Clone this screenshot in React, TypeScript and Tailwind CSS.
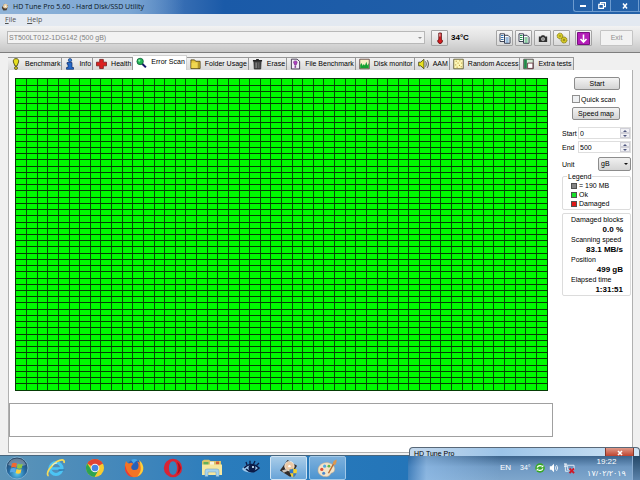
import { useState } from 'react';
import type { ReactNode } from 'react';

const COLUMNS = 50;
const ROWS = 50;

const BenchmarkIcon = () => (
    <svg viewBox="0 0 10 12" className="w-[10px] h-3 shrink-0">
        <path d="M5 .6C2.6.6 2 2.4 2.4 4L4 8h2l1.6-4C8 2.4 7.400.6 5 .6Z" fill="#e8e020" stroke="#3a3a10" strokeWidth=".8" />
        <circle cx="5" cy="10" r="1.500" fill="#d8cc20" stroke="#3a3a10" strokeWidth=".7" />
    </svg>
);

const InfoIcon = () => (
    <svg viewBox="0 0 10 12" className="w-[10px] h-3 shrink-0">
        <circle cx="5" cy="2.200" r="1.700" fill="#3b82d8" stroke="#0b2c6a" strokeWidth=".6" />
        <path d="M2 4.500h5v5h1.500v1.800h-7V9.500H3V6.200H2Z" fill="#2468c8" stroke="#0b2c6a" strokeWidth=".7" />
    </svg>
);

const HealthIcon = () => (
    <svg viewBox="0 0 12 12" className="w-[11px] h-3 shrink-0">
        <path d="M4 1h4v3h3.500v4H8v3H4V8H.5V4H4Z" fill="#dc2020" stroke="#701010" strokeWidth=".8" />
    </svg>
);

const ScanIcon = () => (
    <svg viewBox="0 0 12 12" className="w-[11px] h-3 shrink-0">
        <path d="m6.500 6.500 4.300 4.300" stroke="#16166a" strokeWidth="2.200" />
        <circle cx="4.500" cy="4.300" r="3.500" fill="#22b455" stroke="#11603a" strokeWidth=".9" />
        <circle cx="3.600" cy="3.300" r="1.200" fill="#8ff0a8" />
    </svg>
);

const FolderIcon = () => (
    <svg viewBox="0 0 12 12" className="w-[11px] h-3 shrink-0">
        <path d="M1 3V1.500h4L6.200 3H11v8H1Z" fill="#e4c43c" stroke="#4a3a08" strokeWidth=".9" />
        <path d="M1.600 4.500h7.400v6H1.600Z" fill="#f0d850" />
        <path d="M9 4v6.500" stroke="#8a701c" strokeWidth=".8" />
    </svg>
);

const EraseIcon = () => (
    <svg viewBox="0 0 12 12" className="w-[11px] h-3 shrink-0">
        <path d="M2 3h8l-.5 8.500h-7Z" fill="#4a4a4a" stroke="#1d1d1d" strokeWidth=".7" />
        <path d="M1 1.500h10v1.700H1ZM4.500.5h3v1h-3Z" fill="#222" />
        <path d="M4.500 4.500v6" stroke="#a0a0a0" />
        <path d="M7.300 4.500v6" stroke="#777" strokeWidth=".7" />
    </svg>
);

const FileIcon = () => (
    <svg viewBox="0 0 12 12" className="w-[11px] h-3 shrink-0">
        <path d="M1.500.7h6.200l2.800 2.500v8.200h-9Z" fill="#f4eef8" stroke="#2a2038" strokeWidth=".9" />
        <path d="M5.800 2.600c-1.800 0-2.200 1-1.800 2l1.200 2.800h1.400l1.200-2.800c.4-1-.2-2-2-2Z" fill="#b040c0" stroke="#4a1858" strokeWidth=".5" />
        <circle cx="5.800" cy="9.200" r="1" fill="#803090" />
    </svg>
);

const MonitorIcon = () => (
    <svg viewBox="0 0 12 12" className="w-[11px] h-3 shrink-0">
        <path d="M.8.8h10.400v10.400H.8Z" fill="#f6f0c4" stroke="#5a3a3a" strokeWidth=".9" />
        <path d="M1.300 10.700V7l1.500-2 1.200 3 1.200-2 1.300 1.500 1.500-4 1.200 4L10.700 5v5.700Z" fill="#14a030" />
    </svg>
);

const SpeakerIcon = () => (
    <svg viewBox="0 0 12 12" className="w-[11px] h-3 shrink-0">
        <path d="M.7 4h2.200L6.500.9v10.200L2.900 8H.7Z" fill="#e8e020" stroke="#2c2c08" strokeWidth=".8" />
        <path d="M8.200 3.200c1 1.500 1 4 0 5.600M10 1.800c1.800 2.400 1.800 6 0 8.400" fill="none" stroke="#333" strokeWidth=".9" />
    </svg>
);

const RandomIcon = () => (
    <svg viewBox="0 0 12 12" className="w-[11px] h-3 shrink-0">
        <path d="M.8.8h10.400v10.400H.8Z" fill="#fdf6b4" stroke="#55502c" strokeWidth=".9" />
        <path d="M3 3h1M7 2.500h1M5 5h1M9 5h1M2.500 7h1M6.500 7.500h1M4 9.500h1M8.500 9h1" stroke="#a07818" />
    </svg>
);

const ExtraIcon = () => (
    <svg viewBox="0 0 12 12" className="w-[11px] h-3 shrink-0">
        <path d="M.8.8h10.400v10.400H.8Z" fill="#d8ecd8" stroke="#403838" strokeWidth=".9" />
        <path d="M1.200 1.200h3v9.600h-3Z" fill="#208848" />
        <path d="M5 5h5.800v5.800H5Z" fill="#fff" stroke="#602838" strokeWidth=".9" />
    </svg>
);

const tabs: { name: string; icon: ReactNode }[] = [
    { name: 'Benchmark', icon: <BenchmarkIcon /> },
    { name: 'Info', icon: <InfoIcon /> },
    { name: 'Health', icon: <HealthIcon /> },
    { name: 'Error Scan', icon: <ScanIcon /> },
    { name: 'Folder Usage', icon: <FolderIcon /> },
    { name: 'Erase', icon: <EraseIcon /> },
    { name: 'File Benchmark', icon: <FileIcon /> },
    { name: 'Disk monitor', icon: <MonitorIcon /> },
    { name: 'AAM', icon: <SpeakerIcon /> },
    { name: 'Random Access', icon: <RandomIcon /> },
    { name: 'Extra tests', icon: <ExtraIcon /> },
];

const stats = [
    { label: 'Damaged blocks', value: '0.0 %' },
    { label: 'Scanning speed', value: '83.1 MB/s' },
    { label: 'Position', value: '499 gB' },
    { label: 'Elapsed time', value: '1:31:51' },
];

const legend = [
    { color: 'bg-[#848484]', text: '= 190 MB' },
    { color: 'bg-[#18e028]', text: 'Ok' },
    { color: 'bg-[#e01818]', text: 'Damaged' },
];

function TitleBar() {
    return (
        <header className="h-[14px] flex items-center bg-linear-to-r from-[#9fbfe0] via-[#1a5aa8] via-35% to-[#2461a8] overflow-hidden">
            <div className="h-full flex items-center gap-1 pl-px pr-10 bg-linear-to-r from-[#8fb3d8] via-[#7ba6d4] via-70% to-transparent">
                <svg viewBox="0 0 10 10" className="w-2 h-2">
                    <path d="m1 6 3-5 5 2-2 6-4 .5Z" fill="#4c3c2c" />
                    <circle cx="5.500" cy="4" r="3" fill="#e8d0a8" />
                    <circle cx="5.500" cy="4" r="1" fill="#fff" />
                </svg>
                <h1 className="font-['Open_Sans','Liberation_Sans',sans-serif] text-[7px] leading-3 text-[#0a1420]">HD Tune Pro 5.60 - Hard Disk/SSD Utility</h1>
            </div>
            <div className="ml-auto flex h-3 self-start border-l border-b border-[#6d9bcf] rounded-bl-[3px] text-white">
                <button aria-label="Minimize" className="w-[18px] flex items-center justify-center">
                    <span className="w-[6px] h-[2px] bg-white" />
                </button>
                <button aria-label="Restore" className="w-[18px] border-l border-[#6d9bcf] flex items-center justify-center">
                    <svg viewBox="0 0 8 7" className="w-2 h-[7px]">
                        <path d="M2.500 2V.6h5v4H6M.8 2.300h4.600v4H.8Z" fill="none" stroke="#fff" strokeWidth="1.200" />
                    </svg>
                </button>
                <button aria-label="Close" className="w-[29px] border-x border-[#6d9bcf] mr-px flex items-center justify-center">
                    <svg viewBox="0 0 6 6" className="w-[6px] h-[6px]">
                        <path d="m1 .5 4 5m0-5-4 5" stroke="#fff" strokeWidth="1.500" />
                    </svg>
                </button>
            </div>
        </header>
    );
}

function ToolButton({ label, children }: { label: string; children: ReactNode }) {
    return (
        <button aria-label={label} className="w-[17px] h-4 border border-[#a4a4a4] rounded-[1px] bg-linear-to-b from-[#f6f6f6] to-[#d8d8d8] flex items-center justify-center">
            {children}
        </button>
    );
}

function CopyIcon({ fill }: { fill: string }) {
    return (
        <svg viewBox="0 0 12 11" className="w-3 h-[11px]">
            <path d="M1 .8h4.500v7.700H1Z" fill="#fff" stroke="#2c3448" strokeWidth=".9" />
            <path d="M2 2.500h2.500M2 4.500h2.500M2 6.500h2.500" stroke={fill} />
            <path d="M5.500 2.300H9l2 2v6H5.500Z" fill="#fff" stroke="#2c3448" strokeWidth=".9" />
            <path d="M6.500 5h3.200M6.500 7h3.200M6.500 9h3.200" stroke={fill} />
        </svg>
    );
}

function ToolBar() {
    return (
        <div className="h-[27px] flex items-start pt-1 px-[7px] bg-linear-to-b from-[#f2f2f2] via-[#e0e0e0] to-[#c6c6c6] border-b border-[#7e7e7e]">
            <div className="relative flex-1 mt-px">
                <select aria-label="Drive" disabled className="block w-full h-[13px] appearance-none border border-[#b8b8b8] bg-[#f2f2f2] text-[#808080] text-[7px] leading-[11px] pl-px">
                    <option>ST500LT012-1DG142 (500 gB)</option>
                </select>
                <svg viewBox="0 0 4 2" className="absolute right-[3px] top-[6px] w-1 h-[2px]"><path d="M0 0h4L2 2Z" fill="#909090" /></svg>
            </div>
            <div className="flex items-center gap-[3px] ml-[6px]">
                <ToolButton label="Temperature">
                    <svg viewBox="0 0 8 12" className="w-2 h-3">
                        <path d="M2.800 1h2.600v6.300a2.300 2.300 0 1 1-2.600 0Z" fill="#d81c20" stroke="#501010" strokeWidth=".8" />
                        <path d="M3.500 1.500h.8v3h-.8Z" fill="#fff" />
                    </svg>
                </ToolButton>
                <span className="w-[42px] text-[8px] leading-4 font-bold">34°C</span>
            </div>
            <div className="flex items-center gap-[2px] ml-[3px]">
                <ToolButton label="Copy information"><CopyIcon fill="#3474b8" /></ToolButton>
                <ToolButton label="Copy screenshot"><CopyIcon fill="#20984c" /></ToolButton>
                <ToolButton label="Save screenshot">
                    <svg viewBox="0 0 12 10" className="w-[10px] h-[9px]">
                        <path d="M1 2.500h2.500L4.500 1h3l1 1.500H11v6.700H1Z" fill="#303030" />
                        <circle cx="6" cy="5.700" r="2" fill="#909090" stroke="#e0e0e0" strokeWidth=".6" />
                    </svg>
                </ToolButton>
                <ToolButton label="Options">
                    <svg viewBox="0 0 12 12" className="w-3 h-3">
                        <circle cx="4" cy="4" r="2.800" fill="#d8cc28" stroke="#857c18" strokeDasharray="1.500 .5" />
                        <circle cx="8" cy="8" r="3" fill="#d0c424" stroke="#857c18" strokeDasharray="1.500 .5" />
                        <circle cx="4" cy="4" r=".8" fill="#837a18" />
                        <circle cx="8" cy="8" r=".9" fill="#837a18" />
                    </svg>
                </ToolButton>
            </div>
            <div className="flex gap-2 ml-[5px]">
                <ToolButton label="Minimize to tray">
                    <svg viewBox="0 0 13 13" className="w-[13px] h-[13px]">
                        <path d="M.5.5h12v12H.5Z" fill="#b41cb8" stroke="#781080" />
                        <path d="M6.500 2.500v7M3.500 7l3 3 3-3" fill="none" stroke="#fff" strokeWidth="1.600" />
                    </svg>
                </ToolButton>
                <button disabled className="w-[33px] h-4 border border-[#c4c4c4] rounded-[1px] bg-[#f2f2f2] text-[7px] text-[#909090]">Exit</button>
            </div>
        </div>
    );
}

function BlockMap() {
    return (
        <svg role="img" aria-label="Scanned blocks" className="block w-full h-[313px] bg-[#00fa00] border border-[#053c05]" shapeRendering="crispEdges">
            {Array.from({ length: COLUMNS - 1 }, (_, i) => (
                <line key={`c${i}`} x1={`${((i + 1) * 100) / COLUMNS}%`} x2={`${((i + 1) * 100) / COLUMNS}%`} y1="0" y2="100%" stroke="#065006" />
            ))}
            {Array.from({ length: ROWS - 1 }, (_, i) => (
                <line key={`r${i}`} x1="0" x2="100%" y1={`${((i + 1) * 100) / ROWS}%`} y2={`${((i + 1) * 100) / ROWS}%`} stroke="#053c05" />
            ))}
        </svg>
    );
}

function RangeField({ id, label, value }: { id: string; label: string; value: string }) {
    return (
        <div className="flex items-center h-3">
            <label htmlFor={id} className="w-4">{label}</label>
            <div className="flex-1 h-3 flex border border-[#dedede] bg-white">
                <input id={id} type="text" defaultValue={value} className="w-0 flex-1 h-[10px] pl-px text-[7px] outline-none" />
                <div className="w-[10px] flex flex-col">
                    <button aria-label={`Increase ${label}`} className="h-[5px] border border-[#d0d0d8] bg-[#f0f0f4] flex items-center justify-center">
                        <svg viewBox="0 0 4 2" className="w-1 h-[2px]"><path d="M0 2h4L2 0Z" fill="#505880" /></svg>
                    </button>
                    <button aria-label={`Decrease ${label}`} className="h-[5px] border border-[#d0d0d8] bg-[#f0f0f4] flex items-center justify-center">
                        <svg viewBox="0 0 4 2" className="w-1 h-[2px]"><path d="M0 0h4L2 2Z" fill="#505880" /></svg>
                    </button>
                </div>
            </div>
        </div>
    );
}

function ScanControls() {
    const button = 'block h-[13px] border border-[#8c8c8c] rounded-[2px] bg-linear-to-b from-[#f4f4f4] to-[#d4d4d4] text-[7px] leading-[11px]';

    return (
        <aside className="w-[69px] mr-px pt-[7px] shrink-0 text-[7px] leading-[9px]">
            <button className={`${button} w-[46px] ml-3`}>Start</button>
            <label className="flex items-center gap-px ml-[10px] mt-1 h-[10px]">
                <input type="checkbox" className="appearance-none w-2 h-2 border border-[#909090] bg-[#eef0f2]" />
                Quick scan
            </label>
            <button className={`${button} w-12 ml-[10px] mt-[3px]`}>Speed map</button>

            <div className="mt-[7px] flex flex-col gap-[2px]">
                <RangeField id="range-start" label="Start" value="0" />
                <RangeField id="range-end" label="End" value="500" />
            </div>

            <div className="mt-1 flex items-center justify-between">
                <label htmlFor="unit">Unit</label>
                <div className="relative">
                    <select id="unit" className="block w-[33px] h-[14px] appearance-none border border-[#8c8c8c] rounded-[2px] bg-linear-to-b from-[#f0f0f0] to-[#d4d4d4] pl-[2px] text-[7px] leading-3">
                        <option>gB</option>
                        <option>MB</option>
                    </select>
                    <svg viewBox="0 0 4 2" className="absolute right-[3px] top-[6px] w-1 h-[2px]"><path d="M0 0h4L2 2Z" fill="#111" /></svg>
                </div>
            </div>

            {/* Legend */}
            <fieldset className="mt-px border border-[#dcdcdc] rounded-[2px] pl-2 pb-px">
                <legend className="-ml-1 px-px">Legend</legend>
                {legend.map((item) => (
                    <div key={item.text} className="flex items-center gap-[2px] h-[9px]">
                        <span className={`w-[6px] h-[6px] border border-[#505050] ${item.color}`} />
                        {item.text}
                    </div>
                ))}
            </fieldset>

            {/* Results */}
            <dl className="mt-[3px] border border-[#dcdcdc] rounded-[2px] pl-2 pr-[7px] pt-px">
                {stats.map((stat) => (
                    <div key={stat.label} className="h-5">
                        <dt className="leading-[10px] whitespace-nowrap">{stat.label}</dt>
                        <dd className="leading-[10px] text-right text-[8px] font-bold">{stat.value}</dd>
                    </div>
                ))}
            </dl>
        </aside>
    );
}

const StartOrb = () => (
    <svg viewBox="0 0 24 24" className="w-6 h-6">
        <defs>
            <radialGradient id="orb" cx="50%" cy="75%" r="65%">
                <stop offset="0" stopColor="#58c8f0" />
                <stop offset=".6" stopColor="#2468a0" />
                <stop offset="1" stopColor="#294868" />
            </radialGradient>
        </defs>
        <circle cx="12" cy="12" r="11" fill="url(#orb)" stroke="#7daed0" />
        <path d="M3 9a9.500 9.500 0 0 1 18 0Q12 12 3 9Z" fill="#fff" opacity=".3" />
        <path d="M7 7.500q2.500-1.500 5 0l-1 4.200q-2.500-1.200-5 0Z" fill="#f06830" />
        <path d="M12.800 7.800q2.300 1.200 4.900.2l-1 4.200q-2.500 1-4.900-.2Z" fill="#90c840" />
        <path d="M5.800 12.600q2.500-1.200 5 0l-1 4q-2.400-1.200-5 0Z" fill="#58a8e8" />
        <path d="M11.600 13q2.400 1.200 4.900.2l-1 4q-2.500 1-4.900-.2Z" fill="#fcd040" />
    </svg>
);

const ExplorerIcon = () => (
    <svg viewBox="0 0 20 20" className="w-5 h-5">
        <circle cx="10" cy="10.500" r="6" fill="none" stroke="#4cc4f4" strokeWidth="3.200" />
        <path d="M5 10.500h11" stroke="#4cc4f4" strokeWidth="2.600" />
        <path d="m12.500 13.200 6-.8v-1.200h-6Z" fill="#3180b4" />
        <path d="M2.500 18C-1 16 5 7 11 3.500c4-2.300 8-2.500 7 1.500" fill="none" stroke="#f8dc58" strokeWidth="1.700" />
        <path d="M6 7.500q2-2.700 5-2.600" fill="none" stroke="#d0f4ff" />
    </svg>
);

const ChromeIcon = () => (
    <svg viewBox="0 0 20 20" className="w-5 h-5">
        <circle cx="10" cy="10" r="9" fill="#f8cc30" />
        <path d="M10 10 2.200 5.500A9 9 0 0 1 17.800 5.500Z" fill="#e04434" />
        <path d="M10 6h8a9 9 0 0 0-.2-.5H4Z" fill="#e04434" />
        <path d="M2.200 5.500A9 9 0 0 0 9.500 19l4-6.800L10 14l-3.500-2Z" fill="#2ca450" />
        <circle cx="10" cy="10" r="4.300" fill="#f4f4f4" />
        <circle cx="10" cy="10" r="3.300" fill="#4484e4" />
    </svg>
);

const FirefoxIcon = () => (
    <svg viewBox="0 0 20 20" className="w-5 h-5">
        <circle cx="10.500" cy="9" r="7.500" fill="#2860b8" />
        <path d="M7 2q4-2 7 .5-4 1-4 3.500" fill="#48a8e8" />
        <path d="M2 3q1 2 3 2.500 3-1.500 4 .5L7.500 8q-1 3 2 4 3 .5 4.500-1.500 1.500-4-1-7Q19 5 19.300 11A9.200 9.200 0 0 1 1 11Q.5 6 2 3Z" fill="#f47424" />
        <path d="M15 2q5 4 4.200 9.500-1 5-6 7 4-4.500 3.500-9Q16.500 5 15 2Z" fill="#fcd03c" />
        <path d="M1.500 7Q2 15 9 19 2 18 1 11Z" fill="#e83838" />
    </svg>
);

const OperaIcon = () => (
    <svg viewBox="0 0 20 20" className="w-5 h-5">
        <path fillRule="evenodd" d="M10 .8a9.200 9.200 0 1 1 0 18.400A9.200 9.200 0 1 1 10 .8Zm0 2.400C7.500 3.200 6 6 6 10s1.500 6.800 4 6.800S14 14 14 10s-1.500-6.800-4-6.800Z" fill="#d82434" />
        <path d="M14 4q3 6 0 12 3-1.500 4-6-1-4.500-4-6Z" fill="#a80c20" />
    </svg>
);

const LibraryIcon = () => (
    <svg viewBox="0 0 22 18" className="w-[22px] h-[18px]">
        <path d="M1 2 3 .8h5L9.500 2H20v13H1Z" fill="#dcc468" />
        <path d="M2.500 3h5v3h-5Z" fill="#62b058" /><path d="M9 2.700h4V6H9Z" fill="#f8f4e0" /><path d="M15 2.500h3v3h-3Z" fill="#d06038" />
        <path d="M1 5.500h20V16H1Z" fill="#f6e8a0" />
        <path d="M4 17.500V12q0-2 2-2h10q2 0 2 2v5.500h-3V13H7v4.500Z" fill="#a8d4ec" stroke="#689cc0" strokeWidth=".5" />
    </svg>
);

const EyeIcon = () => (
    <svg viewBox="0 0 20 16" className="w-5 h-4">
        <path d="M1 9Q6 1 18 8 11 15 3 11Z" fill="#9cc8ec" />
        <path d="M3 8Q10 1 18 8q-7 7-13 1" fill="none" stroke="#0c1c48" strokeWidth="1.600" />
        <path d="m6 5-1-3m4 2V.7m3.500 3.600L14 1m1.500 4.500L18 3" stroke="#0c1c48" strokeWidth="1.300" />
        <circle cx="11" cy="8" r="3.500" fill="#0c1c48" /><circle cx="12" cy="7" r="1.100" fill="#d8f0ff" />
    </svg>
);

const TuneIcon = () => (
    <svg viewBox="0 0 20 20" className="w-[19px] h-[19px]">
        <path d="m1 12 8-11 10 6-7 12Z" fill="#342c28" />
        <circle cx="11" cy="7.500" r="5" fill="#ecc8a4" stroke="#fff" strokeWidth=".7" />
        <circle cx="11" cy="7.500" r="1.300" fill="#fff" />
        <path d="m3 12 5-1.500 1 2-4 2Z" fill="#c8c0b8" />
        <path d="M11 11q3 0 4-1.200 1 1.200 4 1.200 0 6-4 8.500-4-2.500-4-8.500Z" fill="#f4d030" />
        <path d="M15 10v5h-3.500q-.5-2-.5-4 3 0 4-1ZM15 15h3.500q-1 3-3.500 4.500Z" fill="#3474c8" />
    </svg>
);

const PaintIcon = () => (
    <svg viewBox="0 0 22 20" className="w-[21px] h-[19px]">
        <path d="M1 12C1 6 7 3 12 4s8 5 6 9c-1 2-3 1-4 3s-3 3-6 2.500S1 16 1 12Z" fill="#f2e4c8" stroke="#c4a88c" strokeWidth=".6" />
        <circle cx="5" cy="11" r="1.700" fill="#e05038" /><circle cx="8" cy="7.500" r="1.600" fill="#50a8e0" />
        <circle cx="12.500" cy="7.500" r="1.500" fill="#60b850" /><circle cx="7" cy="15" r="1.600" fill="#4888d0" />
        <path d="m12 15 6-11" stroke="#b86c34" strokeWidth="1.500" />
        <path d="M16.500 5q0-3 4-4.500.5 4-2 6Z" fill="#dc9850" />
    </svg>
);

const launchers = [
    { name: 'Internet Explorer', icon: <ExplorerIcon /> },
    { name: 'Chrome', icon: <ChromeIcon /> },
    { name: 'Firefox', icon: <FirefoxIcon /> },
    { name: 'Opera', icon: <OperaIcon /> },
    { name: 'Libraries', icon: <LibraryIcon /> },
    { name: 'Viewer', icon: <EyeIcon /> },
];

function TaskBar() {
    return (
        <footer className="relative h-[25px] flex items-center border-t border-[#48667e] bg-linear-to-r from-[#5c94b8] via-[#2a7cbc] via-35% to-[#1c6cb4] text-white">
            <button aria-label="Start" className="w-9 h-6 pl-[5px]"><StartOrb /></button>
            {launchers.map((app) => (
                <button key={app.name} aria-label={app.name} className="w-[39px] h-6 flex items-center justify-center">{app.icon}</button>
            ))}
            <button aria-label="HD Tune Pro" className="w-[37px] h-6 border border-[#d0e4f4] rounded-[2px] bg-linear-to-b from-[#a8cce8] to-[#68a4d8] flex items-center justify-center"><TuneIcon /></button>
            <button aria-label="Paint" className="w-[37px] h-6 ml-[2px] border border-[#a0c8e8] rounded-[2px] bg-linear-to-b from-[#7cb0dc] to-[#4c94d0] flex items-center justify-center"><PaintIcon /></button>

            <div className="ml-auto w-[232px] h-6 flex items-center justify-end bg-linear-to-b from-[#3c648c] via-[#6e98c2] via-45% to-[#7ea6cc]">
                <div className="flex-1 h-full bg-linear-to-r from-[#1c6cb4] via-[#98c4f0] via-20% to-transparent opacity-60" />
                <span className="w-5 text-[8px] leading-[10px]">EN</span>
                <span className="w-[15px] text-[7px] leading-[10px]">34°</span>
                <svg viewBox="0 0 12 12" className="w-[10px] h-[10px] mr-1">
                    <circle cx="6" cy="6" r="5.700" fill="#38a824" />
                    <path d="M2.500 5.500Q4 2 8 3.500M9.500 6.500Q8 10 4 8.500" fill="none" stroke="#fff" strokeWidth="1.500" />
                    <path d="M7 5h3V2ZM5 7H2v3Z" fill="#fff" />
                </svg>
                <svg viewBox="0 0 12 12" className="w-[10px] h-[10px] mr-[5px]">
                    <path d="M1 4h2l3-3v10L3 8H1Z" fill="#fff" />
                    <path d="M7.500 4q1.500 2 0 4M9 2.500q3 3.500 0 7" fill="none" stroke="#fff" />
                </svg>
                <svg viewBox="0 0 12 12" className="w-[11px] h-[11px]">
                    <path d="M4 2.500h7v5H4ZM1.500 1v4m0 0v4H5M0 1h3v3H0Z" fill="none" stroke="#e8f0f8" />
                    <path d="m6 6 5 5m0-5-5 5" stroke="#d01828" strokeWidth="2" />
                </svg>
                <div className="w-[55px] pl-2 text-center text-[8px] leading-3">
                    <div>19:22</div>
                    <div>١٧/٠٢/٢٠١٩</div>
                </div>
                <button aria-label="Show desktop" className="w-2 h-full ml-[2px] border-l border-[#8aacd0] bg-linear-to-b from-[#244868] to-[#5c84ac]" />
            </div>

            {/* Second window sliding up behind the taskbar */}
            <div className="absolute bottom-full right-0 w-[231px] h-[9px] overflow-hidden border border-b-0 border-[#586878] rounded-t-[4px] bg-linear-to-r from-[#c4d8ec] via-[#9cc4e8] via-40% to-[#d0e4f4] text-black flex justify-between pl-1 pr-[5px]">
                <span className="text-[7px] leading-[8px] pt-[2px]">HD Tune Pro</span>
                <button aria-label="Close HD Tune Pro" className="w-[29px] h-[9px] bg-linear-to-b from-[#e09888] to-[#b83420] border-x border-[#80382c] flex items-center justify-center">
                    <svg viewBox="0 0 6 6" className="w-[6px] h-[6px]"><path d="m1 1 4 4m0-4L1 5" stroke="#fff" strokeWidth="1.600" /></svg>
                </button>
            </div>
        </footer>
    );
}

export default function App() {
    const [active, setActive] = useState('Error Scan');

    return (
        <div className="min-h-screen flex flex-col bg-[#f0f0f0] text-black font-['Liberation_Sans','DejaVu_Sans',sans-serif]">
            <TitleBar />
            <nav className="h-3 flex items-center gap-[11px] pl-[5px] bg-[#e3e9f1] font-['Open_Sans','Liberation_Sans',sans-serif] text-[7px] leading-3 text-[#505050]">
                <button><u>F</u>ile</button>
                <button><u>H</u>elp</button>
            </nav>
            <ToolBar />

            <main className="flex-1 flex flex-col pl-2 pr-[7px] pt-[2px] pb-[2px]">
                <div role="tablist" className="flex items-end h-[15px]">
                    {tabs.map((tab) => (
                        <button
                            key={tab.name}
                            role="tab"
                            aria-selected={active === tab.name}
                            onClick={() => setActive(tab.name)}
                            className={`flex items-center gap-1 pl-[3px] pr-px text-[7px] whitespace-nowrap border-r border-t ${
                                active === tab.name
                                    ? 'h-[15px] bg-white border-[#d0d0d0] pb-px'
                                    : 'h-[13px] bg-linear-to-b from-[#f2f2f2] to-[#d8d8d8] border-[#989898]'
                            }`}
                        >
                            {tab.icon}
                            {tab.name}
                        </button>
                    ))}
                </div>
                <section className="flex-1 flex bg-white border border-t-0 border-[#b0b0b0]">
                    <div className="flex-1 flex flex-col pt-2 pr-[9px]">
                        <div className="pl-[6px] pr-[5px]"><BlockMap /></div>
                        <textarea aria-label="Scan messages" readOnly className="block w-full h-[34px] mt-3 border border-[#a0a0a0] bg-white resize-none outline-none" />
                    </div>
                    <ScanControls />
                </section>
            </main>
            <TaskBar />
        </div>
    );
}
